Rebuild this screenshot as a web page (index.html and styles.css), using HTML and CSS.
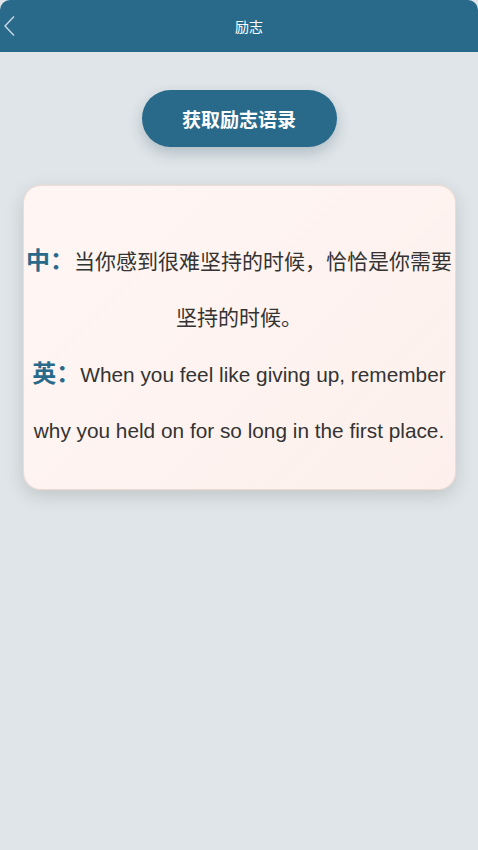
FILE: index.html
```html
<!DOCTYPE html>
<html lang="zh">
<head>
<meta charset="utf-8">
<link rel="stylesheet" href="styles.css">
</head>
<body>
<div class="page">
  <header class="nav">
    <svg class="back" width="14" height="22" viewBox="0 0 14 22"><path d="M13 1.5 L4 11 L13 20.5" fill="none" stroke="#c9d9e3" stroke-width="1.4"/></svg>
    <span class="title">励志</span>
  </header>
  <main class="content">
    <button class="fetch">获取励志语录</button>
    <section class="card">
      <p class="line"><span class="label">中：</span>当你感到很难坚持的时候，恰恰是你需要坚持的时候。</p>
      <p class="line en"><span class="label">英：</span>When you feel like giving up, remember why you held on for so long in the first place.</p>
    </section>
  </main>
</div>
</body>
</html>
```
FILE: styles.css
```css
html, body { margin: 0; padding: 0; }
body {
  background: #dfe5e8;
  font-family: "Liberation Sans", "Noto Sans CJK SC", sans-serif;
}
.page { width: 478px; min-height: 850px; background: #dfe5e8; }
.nav {
  height: 52px;
  background: #296a8b;
  border-radius: 10px 10px 0 0;
  display: flex;
  align-items: center;
  justify-content: center;
  padding-left: 20px;
  position: relative;
}
.back { position: absolute; left: 1px; top: 15px; }
.title {
  color: #ffffff;
  font-family: "Noto Sans CJK SC", sans-serif;
  font-size: 14px;
}
.content {
  display: flex;
  flex-direction: column;
  align-items: center;
  padding-top: 38px;
}
.fetch {
  width: 195px;
  height: 57px;
  border: none;
  border-radius: 29px;
  background: #296a8b;
  color: #fff;
  font-family: "Noto Sans CJK SC", sans-serif;
  font-weight: 700;
  font-size: 19px;
  box-shadow: 0 6px 14px rgba(40, 70, 90, 0.25);
  padding: 0;
}
.card {
  margin-top: 38px;
  width: 433px;
  box-sizing: border-box;
  padding: 46px 2px 30px;
  border-radius: 18px;
  border: 1px solid #f3d9d2;
  background: linear-gradient(135deg, #fff6f4, #fdf0ec);
  box-shadow: 0 6px 18px rgba(60, 60, 60, 0.18);
  text-align: center;
}
.line {
  margin: 0;
  font-size: 21px;
  line-height: 56px;
  color: #333;
  font-family: "Noto Sans CJK SC", sans-serif;
}
.line.en {
  margin-top: 3px;
  font-family: "Liberation Sans", "Noto Sans CJK SC", sans-serif;
  font-size: 20.8px;
}
.label {
  color: #296a8b;
  font-weight: 700;
  font-size: 24px;
  line-height: 1;
  font-family: "Noto Sans CJK SC", sans-serif;
}
```
